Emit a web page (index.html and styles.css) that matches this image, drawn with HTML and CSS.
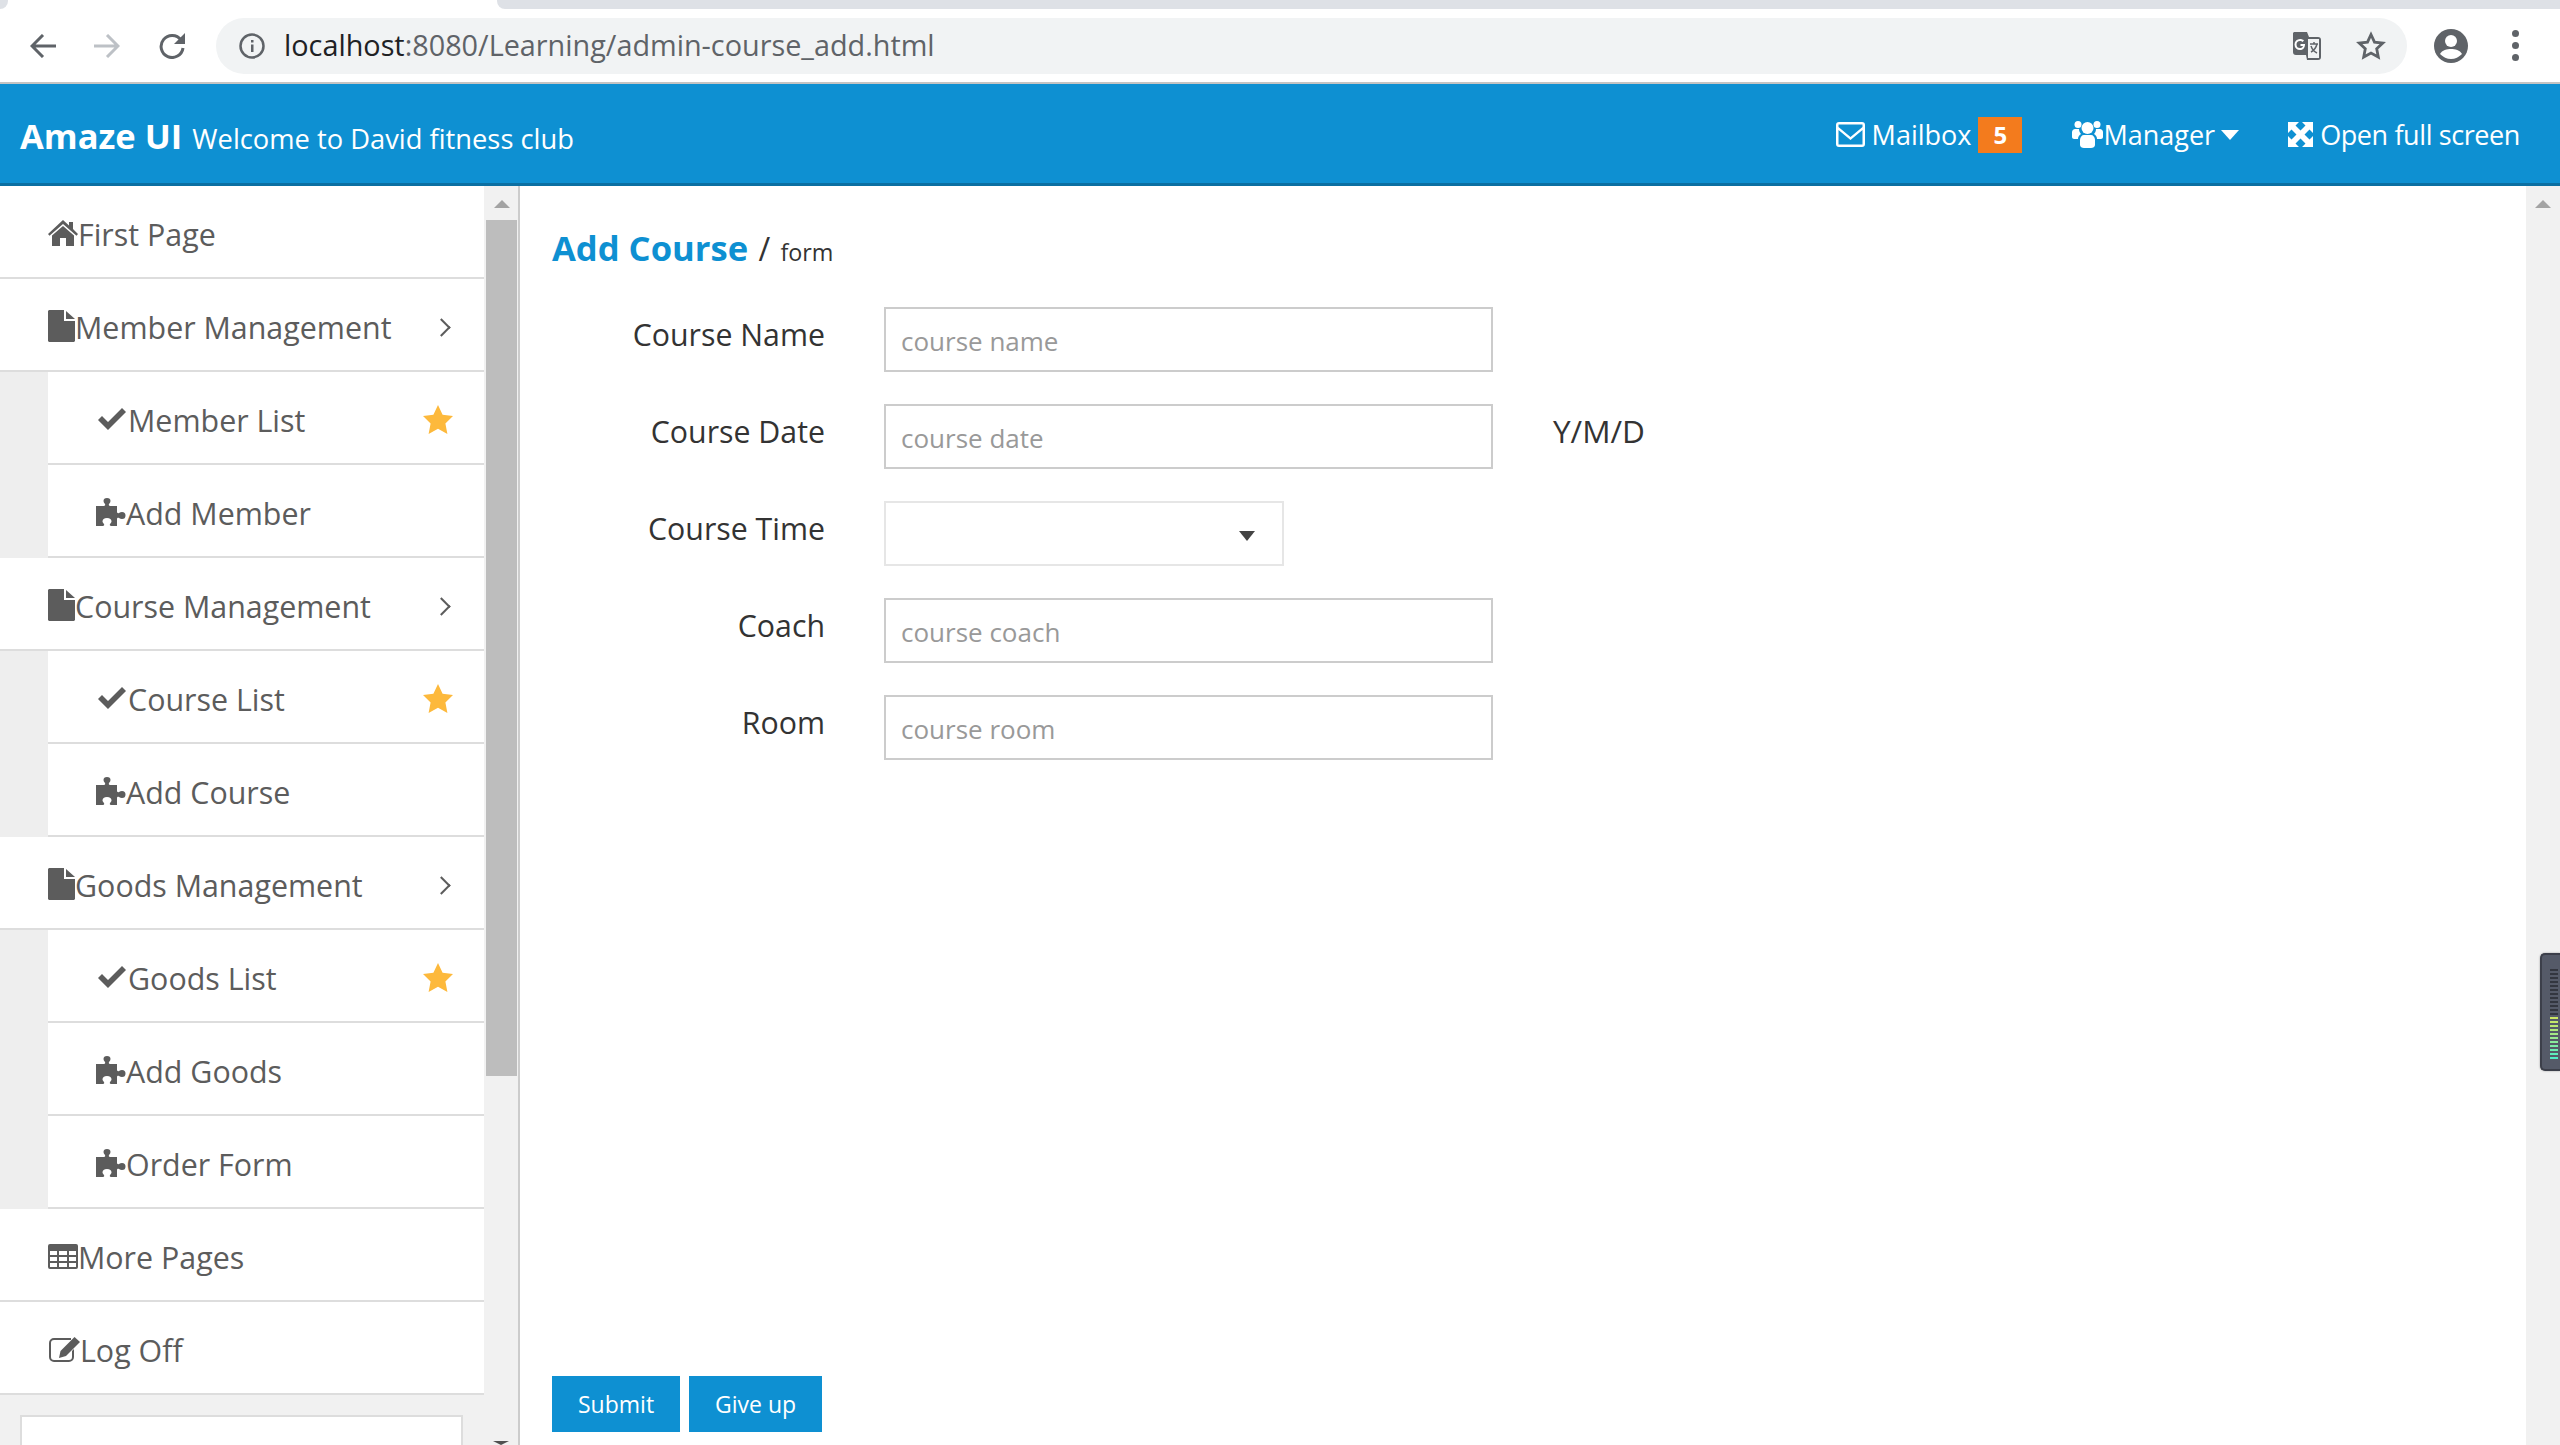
FILE: index.html
```html
<!DOCTYPE html>
<html lang="en">
<head>
  <meta charset="UTF-8">
  <title>Add Course</title>
  <link rel="stylesheet" href="styles.css">
</head>
<body>

<svg class="sprites" xmlns="http://www.w3.org/2000/svg">
  <symbol id="i-home" viewBox="0 0 30 26"><path d="M15 0 21 5.500V2h4v7l5 5-1.500 1.700L15 4 1.500 15.700 0 14zM15 6 26 15.500V26h-8v-8h-6v8H4V15.500z"/></symbol>
  <symbol id="i-file" viewBox="0 0 27 32"><path d="M1 0h15v11h11v20l-1 1H1l-1-1V1zM18 1l9 8h-9z"/></symbol>
  <symbol id="i-check" viewBox="0 0 28 22"><path d="M10 22 0 12l4-4 6 6L24 0l4 4z"/></symbol>
  <symbol id="i-puzzle" viewBox="0 0 30 28"><path d="M0 8H8C9 8 9.500 7 9 6 8 5 7.500 4 7.500 3A3.500 3 0 0 1 14.500 3C14.500 4 14 5 13 6 12.500 7 13 8 14 8H21V14C21 15 22 15.500 23 15 24 14.500 25 14 26 14A3.500 3.500 0 0 1 26 21C25 21 24 20.500 23 20 22 19.500 21 20 21 21V28H15C14 28 13.500 27 14 26 15 25 15.500 24 15.500 23.500A4.500 3.500 0 0 0 6.500 23.500C6.500 24 7 25 8 26 8.500 27 8 28 7 28H0z"/></symbol>
  <symbol id="i-star" viewBox="0 0 30 29"><path d="M15 0l4.600 9.800 10.400 1.300-7.600 7.300 2 10.600L15 23.800 5.600 29l2-10.600L0 11.100l10.400-1.300z"/></symbol>
  <symbol id="i-table" viewBox="0 0 30 25"><path fill-rule="evenodd" d="M2 0h26a2 2 0 0 1 2 2v21a2 2 0 0 1-2 2H2a2 2 0 0 1-2-2V2a2 2 0 0 1 2-2zM2 7v4h7V7zm9 0v4h8V7zm10 0v4h7V7zM2 13v4h7v-4zm9 0v4h8v-4zm10 0v4h7v-4zM2 19v4h7v-4zm9 0v4h8v-4zm10 0v4h7v-4z"/></symbol>
  <symbol id="i-edit" viewBox="0 0 32 27"><path d="M6 2h17v2H6a3 3 0 0 0-3 3v14a3 3 0 0 0 3 3h15a3 3 0 0 0 3-3v-6l2-2v8a5 5 0 0 1-5 5H6a5 5 0 0 1-5-5V7a5 5 0 0 1 5-5z"/><path d="M26.500 1 32 6 18 20l-7 2 1.500-7z"/></symbol>
  <symbol id="i-mail" viewBox="0 0 29 25"><path fill-rule="evenodd" d="M3 0h23a3 3 0 0 1 3 3v19a3 3 0 0 1-3 3H3a3 3 0 0 1-3-3V3a3 3 0 0 1 3-3zm-.500 2.500V5l12 10 12-10V2.500zm0 5.500v14.500h24V8l-12 10z"/></symbol>
  <symbol id="i-users" viewBox="0 0 31 27"><circle cx="15.500" cy="7" r="6"/><circle cx="6" cy="3.500" r="3.500"/><circle cx="25" cy="3.500" r="3.500"/><path d="M0 11c0-2 2-3 3-3h4c0 2 1 4 2 5-2 1-3 3-3 5H2c-1 0-2-1-2-2zM31 11c0-2-2-3-3-3h-4c0 2-1 4-2 5 2 1 3 3 3 5h4c1 0 2-1 2-2zM8 19c0-3 2-5 4-5h7c2 0 4 2 4 5v5c0 2-2 3-4 3h-7c-2 0-4-1-4-3z"/></symbol>
  <symbol id="i-expand" viewBox="0 0 25 25"><path d="M0 0h11L7.500 3.500 12.500 8.500 17.500 3.500 14 0h11v11l-3.500-3.500-5 5 5 5L25 14v11H14l3.500-3.500-5-5-5 5L11 25H0V14l3.500 3.500 5-5-5-5L0 11z"/></symbol>
</svg>

<div class="browser">
  <div class="tabstrip"><span class="tab-end"></span><span class="tab-next"></span></div>
  <div class="toolbar">
    <svg class="nav-icon" viewBox="0 0 26 24"><path d="M26 12H3M13 1 2 12l11 11" fill="none" stroke="#5f6368" stroke-width="3"/></svg>
    <svg class="nav-icon" viewBox="0 0 26 24"><path d="M0 12h23M13 1l11 11-11 11" fill="none" stroke="#bdc1c6" stroke-width="3"/></svg>
    <svg class="nav-icon reload" viewBox="0 0 28 26"><path d="M23 7a11 11 0 1 0 2 8" fill="none" stroke="#5f6368" stroke-width="3"/><path d="M27 0v11H16z" fill="#5f6368"/></svg>
    <div class="omnibox">
      <svg class="info" viewBox="0 0 26 26"><circle cx="13" cy="13" r="11.500" fill="none" stroke="#5f6368" stroke-width="2.500"/><path d="M12 11.500h2.500V19H12zM12 7h2.500v2.500H12z" fill="#5f6368"/></svg>
      <span class="url"><b>localhost</b>:8080/Learning/admin-course_add.html</span>
      <svg class="translate" viewBox="0 0 28 28"><path d="M1 0h13l2 5h9a3 3 0 0 1 3 3v17a3 3 0 0 1-3 3H14l-1-5H3a3 3 0 0 1-3-3V1z" fill="#5f6368"/><path d="M15 7h11v19H15z" fill="#f1f3f4"/><path d="M17 12h8M21 10v2M24 12c-1 4-4 7-6 8M18 14c1 3 4 6 6 7" fill="none" stroke="#5f6368" stroke-width="1.500"/><path d="M12 10v2H7.500v2H10c-.500 1.500-1.500 2-3 2a3.500 3.500 0 0 1 0-7c1 0 2 .300 2.500 1L11 8.500C10 7.500 8.500 7 7 7a5.500 5.500 0 0 0 0 11c3.500 0 5.500-2.500 5-8z" fill="#fff"/></svg>
      <svg class="bookmark" viewBox="0 0 30 29"><path d="M15 3.500l3.500 7.600 8.300 1-6.100 5.700 1.600 8.200L15 22l-7.300 4 1.600-8.200-6.100-5.700 8.300-1z" fill="none" stroke="#5f6368" stroke-width="2.800"/></svg>
    </div>
    <svg class="profile" viewBox="0 0 34 34"><circle cx="17" cy="17" r="17" fill="#5f6368"/><circle cx="17" cy="12" r="6" fill="#fff"/><path d="M6 25c2-4 7-5 11-5s9 1 11 5c-3 3-7 5-11 5s-8-2-11-5z" fill="#fff"/></svg>
    <div class="dots"><i></i><i></i><i></i></div>
  </div>
</div>

<header class="topbar">
  <div class="brand"><strong>Amaze UI</strong> <small>Welcome to David fitness club</small></div>
  <nav class="topnav">
    <a class="mailbox"><svg class="ico"><use href="#i-mail"/></svg><span>Mailbox</span><em class="badge">5</em></a>
    <a class="manager"><svg class="ico"><use href="#i-users"/></svg><span>Manager</span><i class="caret"></i></a>
    <a class="fullscreen"><svg class="ico"><use href="#i-expand"/></svg><span>Open full screen</span></a>
  </nav>
</header>

<div class="layout">
  <aside class="sidebar">
    <ul class="menu">
      <li class="item"><svg class="ico i-home"><use href="#i-home"/></svg>First Page</li>
      <li class="item"><svg class="ico i-file"><use href="#i-file"/></svg>Member Management<span class="arrow"></span></li>
      <li class="item sub"><svg class="ico i-check"><use href="#i-check"/></svg>Member List<svg class="star"><use href="#i-star"/></svg></li>
      <li class="item sub"><svg class="ico i-puzzle"><use href="#i-puzzle"/></svg>Add Member</li>
      <li class="item"><svg class="ico i-file"><use href="#i-file"/></svg>Course Management<span class="arrow"></span></li>
      <li class="item sub"><svg class="ico i-check"><use href="#i-check"/></svg>Course List<svg class="star"><use href="#i-star"/></svg></li>
      <li class="item sub"><svg class="ico i-puzzle"><use href="#i-puzzle"/></svg>Add Course</li>
      <li class="item"><svg class="ico i-file"><use href="#i-file"/></svg>Goods Management<span class="arrow"></span></li>
      <li class="item sub"><svg class="ico i-check"><use href="#i-check"/></svg>Goods List<svg class="star"><use href="#i-star"/></svg></li>
      <li class="item sub"><svg class="ico i-puzzle"><use href="#i-puzzle"/></svg>Add Goods</li>
      <li class="item sub"><svg class="ico i-puzzle"><use href="#i-puzzle"/></svg>Order Form</li>
      <li class="item"><svg class="ico i-table"><use href="#i-table"/></svg>More Pages</li>
      <li class="item"><svg class="ico i-edit"><use href="#i-edit"/></svg>Log Off</li>
    </ul>
    <div class="side-card"></div>
  </aside>
  <div class="scrollbar side-scroll">
    <span class="up"></span>
    <span class="thumb"></span>
    <span class="down"></span>
  </div>

  <main class="content">
    <h1 class="page-title"><strong>Add Course</strong> <span>/</span> <small>form</small></h1>
    <form class="course-form">
      <div class="row"><label>Course Name</label><input type="text" placeholder="course name"></div>
      <div class="row"><label>Course Date</label><input type="text" placeholder="course date"><span class="hint">Y/M/D</span></div>
      <div class="row"><label>Course Time</label><div class="select"><i></i></div></div>
      <div class="row"><label>Coach</label><input type="text" placeholder="course coach"></div>
      <div class="row"><label>Room</label><input type="text" placeholder="course room"></div>
    </form>
    <div class="actions">
      <button type="button">Submit</button>
      <button type="button">Give up</button>
    </div>
  </main>

  <div class="scrollbar main-scroll">
    <span class="up"></span>
    <div class="meter"><i class="off"></i><i class="off"></i><i class="off"></i><i class="off"></i><i class="off"></i><i class="off"></i><i class="off"></i><i class="off"></i><i class="off"></i><i class="off"></i><i class="off"></i><i class="off"></i><i class="c1"></i><i class="c2"></i><i class="c3"></i><i class="c4"></i><i class="c5"></i><i class="c6"></i><i class="c7"></i><i class="c8"></i><i class="c9"></i><i class="c10"></i><i class="c11"></i></div>
  </div>
</div>

</body>
</html>
```

FILE: styles.css
```css
* {
  box-sizing: border-box;
}

html {
  height: 1445px;
  overflow: hidden;
}

body {
  margin: 0;
  height: 1445px;
  overflow: hidden;
  display: flex;
  flex-direction: column;
  background: #fff;
  color: #333;
  font-family: 'Open Sans', 'Noto Sans', sans-serif;
}

.sprites {
  display: none;
}

.ico {
  fill: currentColor;
  flex: none;
}

/* browser chrome */
.browser {
  height: 84px;
  flex: none;
  border-bottom: 2px solid #c4c4c4;
}

.tabstrip {
  height: 9px;
  display: flex;
  justify-content: space-between;
}

.tab-end {
  width: 8px;
  background: #dee1e6;
  border-radius: 0 0 8px 0;
}

.tab-next {
  width: 2063px;
  background: #dee1e6;
  border-radius: 0 0 0 8px;
}

.toolbar {
  height: 73px;
  display: flex;
  align-items: center;
  padding-left: 30px;
}

.nav-icon {
  width: 26px;
  height: 24px;
  margin-right: 38px;
  flex: none;
}

.reload {
  width: 28px;
  height: 26px;
  margin-right: 30px;
}

.omnibox {
  width: 2191px;
  height: 56px;
  flex: none;
  display: flex;
  align-items: center;
  padding-left: 23px;
  background: #f1f3f4;
  border-radius: 28px;
}

.info {
  width: 26px;
  height: 26px;
  margin-right: 19px;
}

.url {
  font-size: 28.800px;
  margin-top: -2px;
  color: #5f6368;
  white-space: nowrap;
}

.url b {
  font-weight: 400;
  color: #202124;
}

.translate {
  width: 28px;
  height: 28px;
  margin-left: auto;
}

.bookmark {
  width: 30px;
  height: 29px;
  margin: 0 21px 0 35px;
}

.profile {
  width: 34px;
  height: 34px;
  margin-left: 27px;
}

.dots {
  display: flex;
  flex-direction: column;
  gap: 5px;
  margin-left: 44px;
}

.dots i {
  width: 7px;
  height: 7px;
  border-radius: 50%;
  background: #5f6368;
}

/* header */
.topbar {
  height: 102px;
  flex: none;
  display: flex;
  align-items: center;
  justify-content: space-between;
  padding: 2px 40px 0 20px;
  background: #0e90d2;
  border-bottom: 3px solid #0b6fa2;
  color: #fff;
}

.brand {
  padding-top: 1px;
}

.brand strong {
  font-size: 34.500px;
  font-weight: 700;
}

.brand small {
  font-size: 27.300px;
  margin-left: 6px;
}

.topnav {
  display: flex;
  align-items: center;
  font-size: 27px;
}

.topnav a {
  display: flex;
  align-items: center;
}

.mailbox .ico {
  width: 29px;
  height: 25px;
  margin-right: 7px;
}

.badge {
  width: 44px;
  height: 36px;
  margin-left: 7px;
  background: #f37b1d;
  font-style: normal;
  font-weight: 700;
  font-size: 24px;
  line-height: 36px;
  text-align: center;
}

.manager {
  margin-left: 50px;
}

.manager .ico {
  width: 31px;
  height: 27px;
}

.caret {
  width: 0;
  height: 0;
  margin-left: 6px;
  border-left: 9px solid transparent;
  border-right: 9px solid transparent;
  border-top: 10px solid #fff;
}

.fullscreen {
  margin-left: 49px;
}

.fullscreen .ico {
  width: 25px;
  height: 25px;
  margin-right: 7px;
}

.fullscreen span {
  letter-spacing: -0.400px;
}

/* page body */
.layout {
  flex: 1;
  min-height: 0;
  display: flex;
}

.sidebar {
  width: 485px;
  flex: none;
  height: 1259px;
  overflow: hidden;
  background: #f1f1f1;
}

.menu {
  list-style: none;
  margin: 0;
  padding: 0;
  width: 484px;
}

.item {
  height: 93px;
  display: flex;
  align-items: center;
  padding: 5px 0 0 48px;
  background: #fff;
  border-bottom: 2px solid #ddd;
  color: #5c5c5c;
  font-size: 30.400px;
}

.sub {
  margin-left: 48px;
  padding-left: 48px;
  position: relative;
}

/* the grey block left of the sub items */
.sub::before {
  content: "";
  position: absolute;
  left: -48px;
  top: 0;
  bottom: -2px;
  width: 48px;
  background: #eee;
}

.i-home { width: 30px; height: 26px; margin-top: -2px; }
.i-file { width: 27px; height: 32px; margin-top: -2px; }
.i-check { width: 28px; height: 22px; margin: -2px 2px 0 2px; }
.i-puzzle { width: 30px; height: 28px; margin-top: -2px; }
.i-table { width: 30px; height: 25px; margin-top: -2px; }
.i-edit { width: 32px; height: 27px; margin-top: -2px; }

.arrow {
  width: 13px;
  height: 13px;
  margin: 0 36px 0 auto;
  border-top: 2px solid #5c5c5c;
  border-right: 2px solid #5c5c5c;
  transform: rotate(45deg);
}

.star {
  width: 30px;
  height: 29px;
  margin: -2px 31px 0 auto;
  fill: #fdb93c;
}

.side-card {
  width: 443px;
  height: 32px;
  margin: 20px 0 0 20px;
  background: #fff;
  border: 2px solid #ddd;
  border-bottom: 0;
}

/* scrollbars */
.scrollbar {
  flex: none;
  background: #f1f1f1;
  position: relative;
  overflow: hidden;
}

.side-scroll {
  width: 35px;
  border-right: 2px solid #ccc;
}

.main-scroll {
  width: 34px;
}

.up {
  position: absolute;
  left: 50%;
  top: 14px;
  margin-left: -8px;
  border-left: 8px solid transparent;
  border-right: 8px solid transparent;
  border-bottom: 8px solid #a3a3a3;
}

.down {
  position: absolute;
  left: 50%;
  bottom: 0;
  margin-left: -9px;
  border-left: 8px solid transparent;
  border-right: 8px solid transparent;
  border-top: 4px solid #505050;
}

.thumb {
  position: absolute;
  left: 1px;
  right: 1px;
  top: 34px;
  height: 856px;
  background: #bdbdbd;
}

.meter {
  position: absolute;
  left: 14px;
  right: 0;
  top: 767px;
  height: 118px;
  display: flex;
  flex-direction: column;
  gap: 2px;
  padding: 14px 0 0 8px;
  background: #555a68;
  border-radius: 5px 0 0 5px;
  border: 2px solid #3c3f4a;
  border-right: 0;
  box-shadow: 0 0 2px #999;
}

.meter i {
  width: 8px;
  height: 2px;
}

.meter .off { background: #33363f; }
.meter .c1 { background: #cbe663; }
.meter .c2 { background: #c3e76b; }
.meter .c3 { background: #bae872; }
.meter .c4 { background: #aee97c; }
.meter .c5 { background: #a3ea86; }
.meter .c6 { background: #97eb90; }
.meter .c7 { background: #8aeb9b; }
.meter .c8 { background: #7ceca6; }
.meter .c9 { background: #6eecb1; }
.meter .c10 { background: #5fedbc; }
.meter .c11 { background: #52eec6; }

/* main form */
.content {
  flex: 1;
  min-width: 0;
  height: 1259px;
  display: flex;
  flex-direction: column;
  padding: 0 0 13px 32px;
}

.page-title {
  height: 121px;
  margin: 0;
  padding-top: 37px;
  font-size: 28px;
  font-weight: 400;
  line-height: 50px;
  color: #333;
}

.page-title strong {
  font-size: 34.600px;
  font-weight: 700;
  color: #0e90d2;
}

.page-title span {
  font-size: 32px;
  margin: 0 3px;
}

.course-form {
  display: flex;
  flex-direction: column;
  gap: 32px;
}

.row {
  display: flex;
  height: 65px;
}

.row label {
  width: 273px;
  margin-right: 59px;
  text-align: right;
  font-size: 30.300px;
  line-height: 55px;
}

.row input {
  width: 609px;
  height: 65px;
  padding: 3px 15px 0;
  border: 2px solid #ccc;
  border-radius: 0;
  font-family: inherit;
  font-size: 26px;
  outline: none;
}

.row input::placeholder {
  color: #999;
  opacity: 1;
}

.hint {
  margin-left: 60px;
  font-size: 31.500px;
  line-height: 54px;
}

.select {
  width: 400px;
  height: 65px;
  border: 2px solid #e6e6e6;
  display: flex;
  align-items: center;
  justify-content: flex-end;
  padding: 4px 27px 0 0;
}

.select i {
  border-left: 8px solid transparent;
  border-right: 8px solid transparent;
  border-top: 10px solid #444;
}

.actions {
  margin-top: auto;
  display: flex;
  gap: 9px;
}

.actions button {
  height: 56px;
  padding: 0 26px;
  background: #0e90d2;
  color: #fff;
  border: none;
  font-family: inherit;
  font-size: 23px;
}
```
